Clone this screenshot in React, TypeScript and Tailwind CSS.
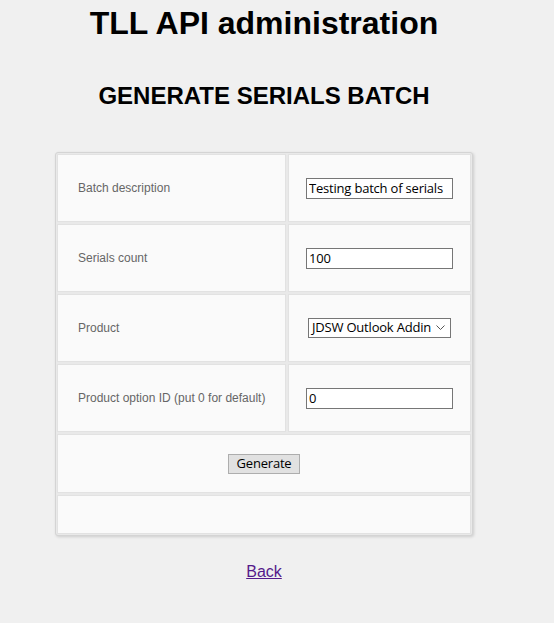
import { useState } from "react";

const rows = [
  { label: "Batch description", kind: "text", value: "Testing batch of serials" },
  { label: "Serials count", kind: "text", value: "100" },
  { label: "Product", kind: "select", value: "JDSW Outlook Addin" },
  { label: "Product option ID (put 0 for default)", kind: "text", value: "0" },
];

const App = () => {
  const [values, setValues] = useState(rows.map((r) => r.value));

  return (
    <div className="min-h-[623px] bg-[#f0f0f0] font-['Liberation_Sans',Arial,sans-serif] text-black">
      <div className="w-[528px] flex flex-col items-center">
        <h1 className="mt-[5px] text-[32px] font-bold leading-[37px]">TLL API administration</h1>
        <h2 className="mt-[40px] text-[24px] font-bold leading-[28px]">GENERATE SERIALS BATCH</h2>

        {/* Form table */}
        <div className="mt-[42px] w-[418px] rounded-[3px] border border-[#d4d4d4] bg-[#e9e9e9] p-px shadow-[1px_1px_3px_rgba(0,0,0,0.15)]">
          <div className="grid grid-cols-[229px_1fr] gap-[2px]">
            {rows.map((row, i) => (
              <div key={row.label} className="contents">
                <div className="flex h-[68px] items-center border border-[#e2e2e2] bg-[#fafafa] pl-[20px] text-[12px] text-[#666]">
                  {row.label}
                </div>
                <div className="flex h-[68px] items-center border border-[#e2e2e2] bg-[#fafafa] pl-[17px]">
                  {row.kind === "select" ? (
                    <div className="relative ml-[2px] flex h-[20px] w-[143px] items-center border border-[#767676] bg-white pl-[3px] font-['Open_Sans',sans-serif] text-[13px] tracking-[-0.2px] text-black">
                      <span>{values[i]}</span>
                      <svg className="absolute right-[5px] top-[6px]" width="9" height="6" viewBox="0 0 9 6">
                        <path d="M0.5 0.5 L4.5 4.5 L8.5 0.5" fill="none" stroke="#555" strokeWidth="1" />
                      </svg>
                    </div>
                  ) : (
                    <input
                      type="text"
                      value={values[i]}
                      onChange={(e) => {
                        const next = [...values];
                        next[i] = e.target.value;
                        setValues(next);
                      }}
                      className="h-[21px] w-[147px] border border-[#767676] bg-white px-[2px] font-['Open_Sans',sans-serif] text-[13px] tracking-[-0.2px] text-black outline-none"
                    />
                  )}
                </div>
              </div>
            ))}
            <div className="col-span-2 flex h-[59px] items-center justify-center border border-[#e2e2e2] bg-[#fafafa]">
              <button
                type="button"
                className="h-[20px] w-[72px] border border-[#adadad] bg-[#e1e1e1] font-['Open_Sans',sans-serif] text-[13px] leading-none tracking-[-0.2px] text-black"
              >
                Generate
              </button>
            </div>
            <div className="col-span-2 h-[39px] border border-[#e2e2e2] bg-[#fafafa]" />
          </div>
        </div>

        <a href="#" className="mt-[24px] text-[16px] text-[#551a8b] underline">
          Back
        </a>
      </div>
    </div>
  );
};

export default App;
